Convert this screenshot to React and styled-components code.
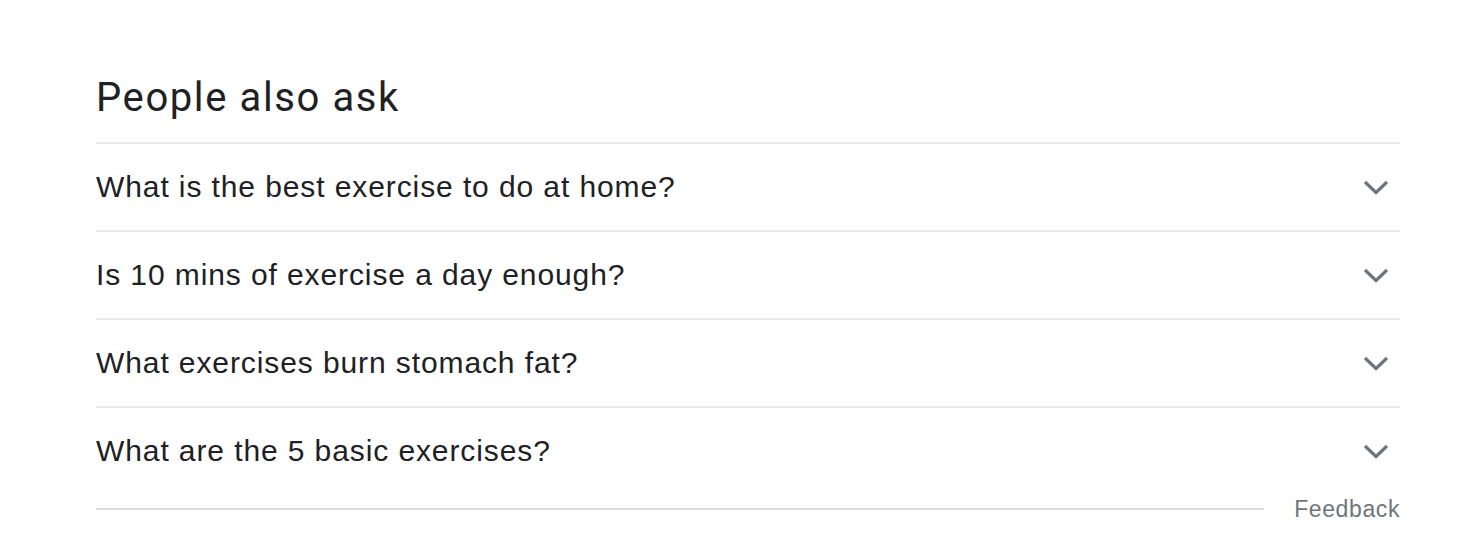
import React from "react";
import styled, { createGlobalStyle } from "styled-components";

const Global = createGlobalStyle`
  html, body { margin: 0; padding: 0; background: #fff; }
  body { font-family: "Liberation Sans", Arial, sans-serif; color: #202124; }
`;

const Wrap = styled.section`
  width: 1304px;
  margin-left: 96px;
  padding-top: 72px;
`;

const Title = styled.h2`
  margin: 0;
  font-family: Roboto, "Open Sans", sans-serif;
  font-weight: 400;
  font-size: 40px;
  line-height: 52px;
  height: 70px;
  color: #202124;
  letter-spacing: 1.6px;
`;

const List = styled.div`
  border-top: 2px solid #ebebeb;
`;

const Row = styled.div`
  display: flex;
  align-items: center;
  justify-content: space-between;
  height: 86px;
  border-bottom: 2px solid #ebebeb;
  &:last-child { border-bottom: none; }
`;

const Question = styled.span`
  font-size: 30px;
  letter-spacing: 0.9px;
  color: #202124;
`;

const Chevron = styled.svg`
  width: 28px;
  height: 28px;
  margin-right: 10px;
  flex: none;
`;

const Footer = styled.div`
  display: flex;
  align-items: center;
  gap: 30px;
  height: 30px;
`;

const Rule = styled.div`
  flex: 1;
  height: 2px;
  background: #dadce0;
`;

const Feedback = styled.span`
  font-size: 23px;
  letter-spacing: 0.6px;
  color: #70757a;
`;

const questions = [
  "What is the best exercise to do at home?",
  "Is 10 mins of exercise a day enough?",
  "What exercises burn stomach fat?",
  "What are the 5 basic exercises?",
];

export default function App() {
  return (
    <>
      <Global />
      <Wrap>
        <Title>People also ask</Title>
        <List>
          {questions.map((q) => (
            <Row key={q}>
              <Question>{q}</Question>
              <Chevron viewBox="0 0 28 28">
                <path d="M3 9 L14 19.5 L25 9" fill="none" stroke="#70757a" strokeWidth="3.2" />
              </Chevron>
            </Row>
          ))}
        </List>
        <Footer>
          <Rule />
          <Feedback>Feedback</Feedback>
        </Footer>
      </Wrap>
    </>
  );
}
